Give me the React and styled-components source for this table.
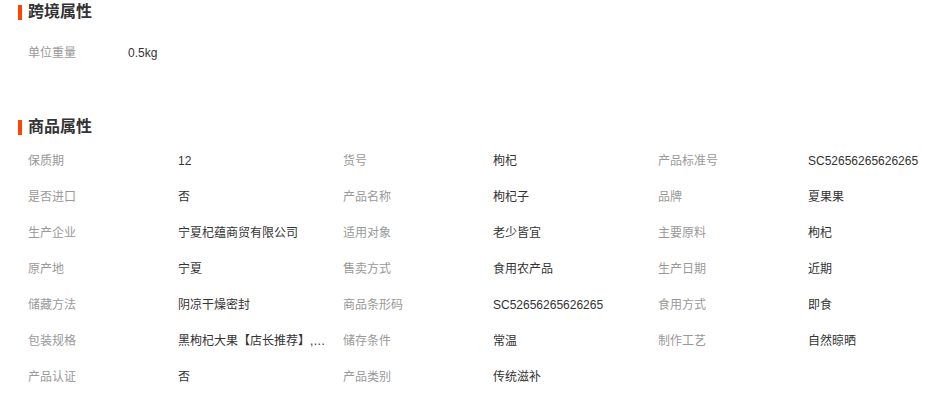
import React from 'react'
import styled, { createGlobalStyle } from 'styled-components'

const GlobalStyle = createGlobalStyle`
  body {
    margin: 0;
    background: #fff;
    font-family: "Liberation Sans", "Noto Sans CJK SC", sans-serif;
  }
`

const crossBorder = [{ label: '单位重量', value: '0.5kg' }]

const goods = [
  ['保质期', '12'], ['货号', '枸杞'], ['产品标准号', 'SC52656265626265'],
  ['是否进口', '否'], ['产品名称', '枸杞子'], ['品牌', '夏果果'],
  ['生产企业', '宁夏杞蕴商贸有限公司'], ['适用对象', '老少皆宜'], ['主要原料', '枸杞'],
  ['原产地', '宁夏'], ['售卖方式', '食用农产品'], ['生产日期', '近期'],
  ['储藏方法', '阴凉干燥密封'], ['商品条形码', 'SC52656265626265'], ['食用方式', '即食'],
  ['包装规格', '黑枸杞大果【店长推荐】,250g/罐'], ['储存条件', '常温'], ['制作工艺', '自然晾晒'],
  ['产品认证', '否'], ['产品类别', '传统滋补'],
]

function App() {
  return (
    <Page>
      <GlobalStyle />
      <Section>
        <Title>跨境属性</Title>
        <Grid $gap={11}>
          {crossBorder.map((item) => (
            <Cell key={item.label}>
              <Label $w={100}>{item.label}</Label>
              <Value>{item.value}</Value>
            </Cell>
          ))}
        </Grid>
      </Section>
      <Section $top={44}>
        <Title>商品属性</Title>
        <Grid $gap={4}>
          {goods.map(([label, value]) => (
            <Cell key={label}>
              <Label $w={150}>{label}</Label>
              <Value>{value}</Value>
            </Cell>
          ))}
        </Grid>
      </Section>
    </Page>
  )
}

const Page = styled.div`
  padding-left: 18px;
  width: 943px;
  box-sizing: border-box;
`

const Section = styled.div`
  margin-top: ${(p) => p.$top || 0}px;
`

const Title = styled.h3`
  margin: 0;
  height: 24px;
  line-height: 24px;
  font-size: 16px;
  font-weight: bold;
  color: #333;
  display: flex;
  align-items: center;
  &::before {
    content: '';
    width: 4px;
    height: 15px;
    background: #ff4400;
    margin-right: 6px;
  }
`

const Grid = styled.div`
  display: grid;
  grid-template-columns: repeat(3, 315px);
  padding-left: 10px;
  margin-top: ${(p) => p.$gap}px;
`

const Cell = styled.div`
  display: flex;
  height: 36px;
  align-items: center;
  font-size: 12px;
  line-height: 18px;
`

const Label = styled.div`
  width: ${(p) => p.$w}px;
  height: 18px;
  flex-shrink: 0;
  color: #999;
`

const Value = styled.div`
  width: 148px;
  height: 18px;
  color: #333;
  white-space: nowrap;
  overflow: hidden;
  text-overflow: ellipsis;
`

export default App
